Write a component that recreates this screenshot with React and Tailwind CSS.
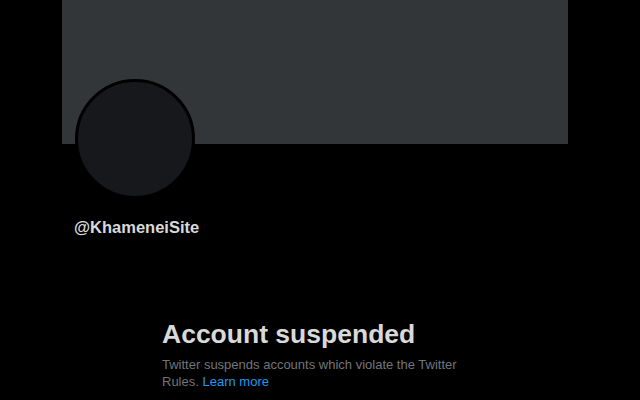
export default function App() {
  return (
    <div className="w-[640px] h-[400px] bg-black overflow-hidden" style={{ fontFamily: '"Liberation Sans", Arial, sans-serif' }}>
      <div className="ml-[62px] w-[506px] h-[144px] bg-[#333639]" />
      <div className="ml-[75px] mt-[-65px] w-[120px] h-[120px] rounded-full border-[3px] border-black bg-[#16181c] relative" />
      <div className="ml-[74px] mt-[18px] text-[16.5px] leading-[20px] font-bold text-[#d9d9d9]">@KhameneiSite</div>
      <div className="ml-[162px] mt-[81px] w-[310px]">
        <div className="text-[26.5px] leading-[32px] font-bold text-[#d9d9d9]">Account suspended</div>
        <div className="mt-[6px] text-[13px] leading-[17px] text-[#71767b]">
          Twitter suspends accounts which violate the Twitter Rules.{" "}
          <span className="text-[#1d9bf0]">Learn more</span>
        </div>
      </div>
    </div>
  );
}
